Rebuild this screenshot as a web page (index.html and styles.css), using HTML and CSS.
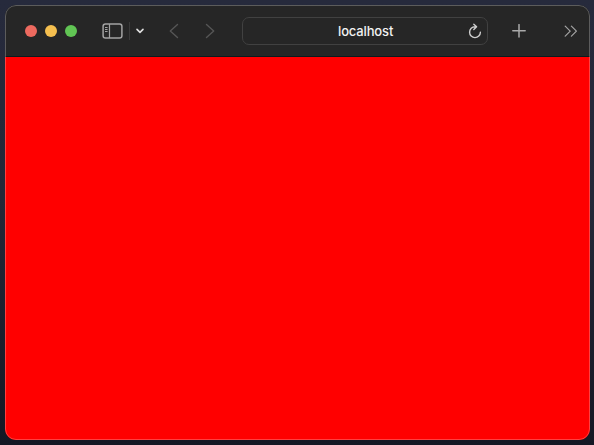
FILE: index.html
```html
<!DOCTYPE html>
<html lang="en">
<head>
<meta charset="utf-8">
<title>localhost</title>
<link rel="stylesheet" href="styles.css">
</head>
<body>
<div class="window">
  <header class="toolbar">
    <div class="lights">
      <span class="light close"></span>
      <span class="light minimize"></span>
      <span class="light zoom"></span>
    </div>
    <svg class="sidebar" width="21" height="16" viewBox="0 0 21 16" fill="none" stroke="#a3a3a3">
      <rect x="1.1" y=".9" width="18.8" height="14.2" rx="2.3" stroke-width="1.5"/>
      <path d="M7.5 1v14" stroke-width="1.2"/>
      <path d="M3 4.5h2.6M3 6.5h2.6M3 8.5h2.6" stroke-width="1"/>
    </svg>
    <span class="divider"></span>
    <svg class="chevron" width="10" height="6" viewBox="0 0 10 6" fill="none" stroke="#dedede" stroke-width="1.6" stroke-linecap="round" stroke-linejoin="round"><path d="M2 1.4l3 3 3-3"/></svg>
    <svg class="back" width="10" height="16" viewBox="0 0 10 16" fill="none" stroke="#555" stroke-width="1.4" stroke-linecap="round" stroke-linejoin="round"><path d="M8.5 1.4L1.3 8l7.2 6.6"/></svg>
    <svg class="forward" width="10" height="16" viewBox="0 0 10 16" fill="none" stroke="#555" stroke-width="1.4" stroke-linecap="round" stroke-linejoin="round"><path d="M1.5 1.4L8.7 8l-7.2 6.6"/></svg>
    <div class="address">
      <span class="host">localhost</span>
      <svg class="reload" width="14" height="16" viewBox="0 0 14 16" fill="none" stroke="#cecece" stroke-width="1.4" stroke-linecap="round" stroke-linejoin="round"><path d="M7.9 3.8H7a5.4 5.4 0 1 0 5.4 5.5M5.8 1.2l2.8 2.6-2.8 2.8"/></svg>
    </div>
    <svg class="plus" width="14" height="14" viewBox="0 0 14 14" fill="none" stroke="#aaa" stroke-width="1.5" stroke-linecap="round"><path d="M.8 6.8h12.4M7 .6v12.4"/></svg>
    <svg class="more" width="14" height="12" viewBox="0 0 14 12" fill="none" stroke="#a3a3a3" stroke-width="1.2" stroke-linecap="round" stroke-linejoin="round"><path d="M1.2 1.2l5 5-5 5M7.4 1.2l5 5-5 5"/></svg>
  </header>
  <main class="page"></main>
</div>
</body>
</html>
```
FILE: styles.css
```css
* { box-sizing: border-box; }

body {
  margin: 0;
  height: 445px;
  padding: 5px 4px 5px 5px;
  overflow: hidden;
  background: linear-gradient(#262a3c, #242838 45%, #151824);
}

.window {
  position: relative;
  display: flex;
  flex-direction: column;
  height: 435px;
  border-radius: 11px;
  overflow: hidden;
  background: #262626;
}

/* hairline highlight around the window edge */
.window::after {
  content: "";
  position: absolute;
  inset: 0;
  border: 1px solid rgba(255, 255, 255, .25);
  border-radius: 11px;
}

.toolbar {
  display: flex;
  align-items: center;
  height: 52px;
  padding-left: 20px;
  border-bottom: 1px solid #0b1b1d;
}

.toolbar svg { flex: none; }

.lights { display: flex; gap: 8px; }
.light { width: 12px; height: 12px; border-radius: 50%; }
.close { background: #ed6a5f; }
.minimize { background: #f5bf4f; }
.zoom { background: #61c554; }

.sidebar { margin-left: 25px; }
.divider { width: 1px; height: 18px; margin-left: 6px; background: #3b3b3b; }
.chevron { margin-left: 5px; }
.back { margin-left: 24px; }
.forward { margin-left: 26px; }

.address {
  display: flex;
  align-items: center;
  width: 246px;
  height: 28px;
  margin-left: 27px;
  padding: 0 5px 0 95px;
  border: 1px solid #414141;
  border-radius: 7px;
}

.host {
  flex: 1;
  color: #f2f2f2;
  font: 500 13px/16px Inter, sans-serif;
  letter-spacing: -.15px;
}

.plus { margin-left: 24px; }
.more { margin-left: 38px; }

.page { flex: 1; background: #f00; }
```
